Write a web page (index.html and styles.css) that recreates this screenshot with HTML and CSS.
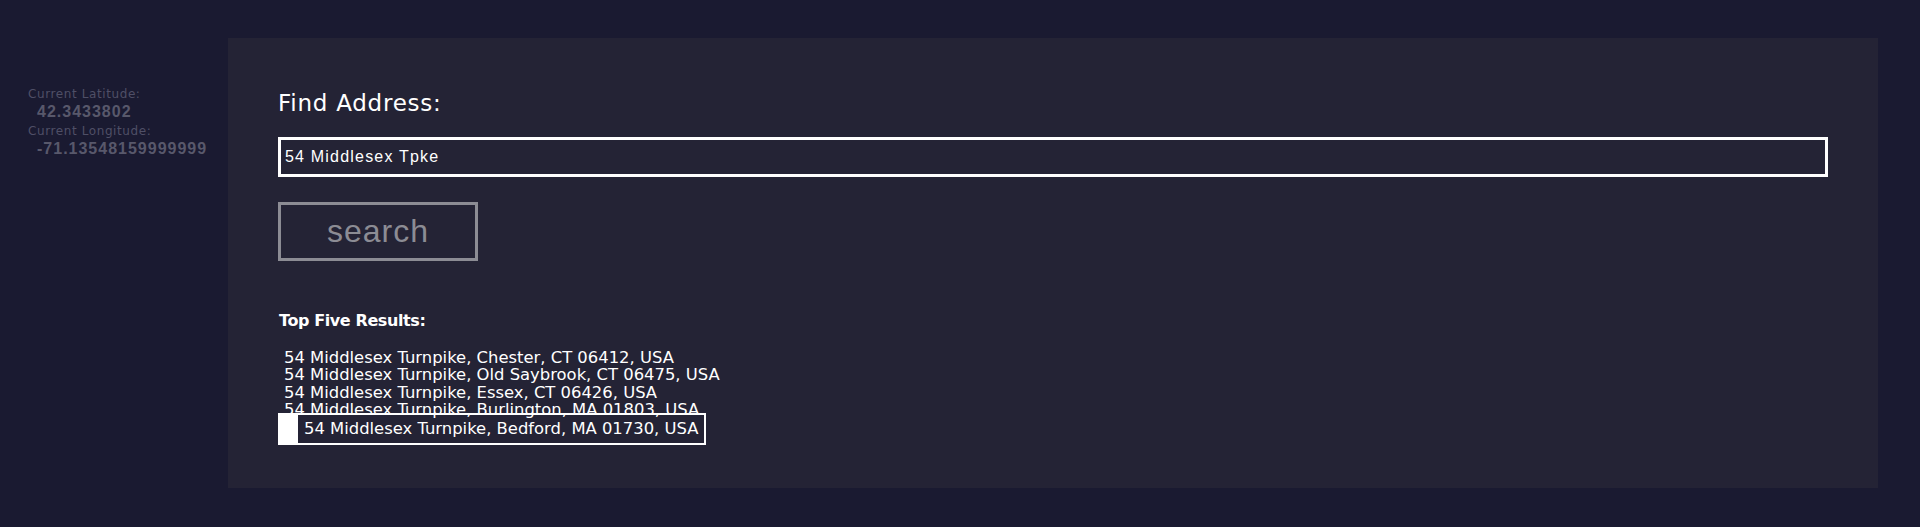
FILE: index.html
```html
<!DOCTYPE html>
<html lang="en">
<head>
<meta charset="utf-8">
<title>Find Address</title>
<link rel="stylesheet" href="styles.css">
</head>
<body>
<div class="page">
  <aside class="sidebar">
    <div class="label">Current Latitude:</div>
    <div class="coord">42.3433802</div>
    <div class="label">Current Longitude:</div>
    <div class="coord">-71.13548159999999</div>
  </aside>
  <main class="panel">
    <h2 class="title">Find Address:</h2>
    <input class="address" type="text" value="54 Middlesex Tpke">
    <button class="search" type="button">search</button>
    <h3 class="results-title">Top Five Results:</h3>
    <ul class="results">
      <li class="result">54 Middlesex Turnpike, Chester, CT 06412, USA</li>
      <li class="result">54 Middlesex Turnpike, Old Saybrook, CT 06475, USA</li>
      <li class="result">54 Middlesex Turnpike, Essex, CT 06426, USA</li>
      <li class="result">54 Middlesex Turnpike, Burlington, MA 01803, USA</li>
      <li class="result result-active">54 Middlesex Turnpike, Bedford, MA 01730, USA</li>
    </ul>
  </main>
</div>
</body>
</html>
```

FILE: styles.css
```css
html, body {
  margin: 0;
  padding: 0;
  background: #1a1a31;
}

body {
  width: 1920px;
  height: 527px;
  overflow: hidden;
}

.page {
  display: flex;
  align-items: flex-start;
  padding: 38px 0 0 28px;
}

.sidebar {
  width: 200px;
  flex-shrink: 0;
  margin-top: 49px;
}

.label {
  font-family: "DejaVu Sans", Verdana, sans-serif;
  font-size: 12px;
  line-height: 14px;
  letter-spacing: 0.6px;
  color: #4f4f66;
}

.coord {
  font-family: "Liberation Sans", Arial, sans-serif;
  font-weight: bold;
  font-size: 16px;
  line-height: 22px;
  letter-spacing: 1px;
  color: #58586b;
  padding-left: 9px;
  margin-bottom: 1px;
}

.panel {
  width: 1650px;
  height: 450px;
  box-sizing: border-box;
  background: #242335;
  padding: 52px 50px 0 50px;
  display: flex;
  flex-direction: column;
  align-items: flex-start;
}

.title {
  margin: 0;
  font-family: "DejaVu Sans", Verdana, sans-serif;
  font-weight: normal;
  font-size: 23px;
  line-height: 26px;
  letter-spacing: 0.75px;
  color: #ffffff;
}

.address {
  margin-top: 21px;
  width: 100%;
  height: 40px;
  box-sizing: border-box;
  border: 3px solid #ffffff;
  background: transparent;
  padding: 0 4px;
  font-family: "Liberation Sans", Arial, sans-serif;
  font-size: 16px;
  letter-spacing: 1.2px;
  color: #ffffff;
  outline: none;
}

.search {
  margin-top: 25px;
  width: 200px;
  height: 59px;
  box-sizing: border-box;
  border: 3px solid #8c8c94;
  background: transparent;
  padding: 0;
  font-family: "Liberation Sans", Arial, sans-serif;
  font-size: 32px;
  letter-spacing: 1px;
  color: #8c8c94;
}

.results-title {
  margin: 50px 0 0 1px;
  font-family: "DejaVu Sans", Verdana, sans-serif;
  font-weight: bold;
  font-size: 16px;
  line-height: 19px;
  letter-spacing: -0.4px;
  color: #ffffff;
}

.results {
  list-style: none;
  margin: 19px 0 0 0;
  padding: 0;
  font-family: "DejaVu Sans", Verdana, sans-serif;
  font-size: 16.4px;
  line-height: 17.3px;
  color: #ffffff;
}

.result {
  padding: 0 6px;
  white-space: nowrap;
}

.result-active {
  width: fit-content;
  margin-top: -5px;
  padding: 5px 6px 6px 6px;
  border: 2px solid #ffffff;
  border-left-width: 20px;
  background: #242335;
}
```
